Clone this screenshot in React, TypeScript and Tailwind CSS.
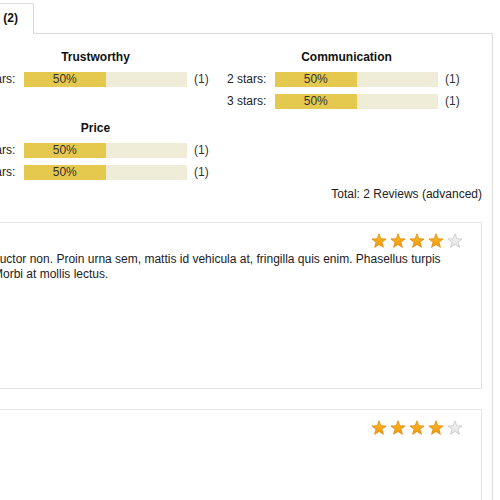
import React from "react";

type Group = { title: string; rows: { label: string; pct: string; count: string }[] };

const groups: Group[] = [
  { title: "Quality", rows: [{ label: "4 stars:", pct: "50%", count: "(1)" }] },
  { title: "Trustworthy", rows: [{ label: "4 stars:", pct: "50%", count: "(1)" }] },
  {
    title: "Communication",
    rows: [
      { label: "2 stars:", pct: "50%", count: "(1)" },
      { label: "3 stars:", pct: "50%", count: "(1)" },
    ],
  },
  {
    title: "Value",
    rows: [
      { label: "3 stars:", pct: "50%", count: "(1)" },
      { label: "5 stars:", pct: "50%", count: "(1)" },
    ],
  },
  {
    title: "Price",
    rows: [
      { label: "3 stars:", pct: "50%", count: "(1)" },
      { label: "4 stars:", pct: "50%", count: "(1)" },
    ],
  },
];

const reviews = [
  {
    author: "John Smith",
    date: "12 March 2012",
    text: "auctor non. Proin urna sem, mattis id vehicula at, fringilla quis enim. Phasellus turpis Morbi at mollis lectus.",
  },
  {
    author: "Jane Doe",
    date: "02 February 2012",
    text: "",
  },
];

function Star({ on }: { on: boolean }) {
  const id = on ? "starOn" : "starOff";
  return (
    <svg width="16" height="16" viewBox="0 0 16 16">
      <defs>
        <linearGradient id={id} x1="0" y1="0" x2="0" y2="1">
          <stop offset="0" stopColor={on ? "#fcc230" : "#f6f6f6"} />
          <stop offset="1" stopColor={on ? "#ef920c" : "#e2e2e2"} />
        </linearGradient>
      </defs>
      <polygon
        points="8,0.8 9.82,5.79 15.13,5.98 10.95,9.26 12.41,14.37 8,11.4 3.59,14.37 5.05,9.26 0.87,5.98 6.18,5.79"
        fill={`url(#${id})`}
        stroke={on ? "#e08a06" : "#c8c8c8"}
        strokeWidth="0.8"
        strokeLinejoin="round"
      />
    </svg>
  );
}

function RatingGroup({ group }: { group: Group }) {
  return (
    <div className="flex flex-col gap-[7px]">
      <div className="text-center font-bold text-[#111]">{group.title}</div>
      {group.rows.map((r) => (
        <div key={r.label} className="flex h-[15px] items-center">
          <span className="w-[40px] mr-[8px]">{r.label}</span>
          <div className="w-[163px] h-[15px] bg-[#efedd8]">
            <div className="w-1/2 h-full bg-[#e5c94f] flex items-center justify-center text-[#333]">
              {r.pct}
            </div>
          </div>
          <span className="ml-[7px] text-[#333]">{r.count}</span>
        </div>
      ))}
    </div>
  );
}

export default function App() {
  return (
    <div className="w-[500px] h-[500px] overflow-hidden bg-white font-['Liberation_Sans',Arial,sans-serif] text-[12px] leading-[15px] text-[#222]">
      <div className="-ml-[300px] w-[793px] pt-[3px]">
        {/* tabs */}
        <div className="flex">
          <div className="ml-[236px] relative z-10 -mb-px border border-b-0 border-[#dcdcdc] bg-white px-[15px] pt-[7px] pb-[8px] font-bold text-[#111]">
            Reviews (2)
          </div>
        </div>

        <div className="h-[470px] border border-[#dcdcdc] pt-[16px] pl-[24px] pr-[10px]">
          <div className="grid grid-cols-[239px_239px_239px] gap-x-[12px] gap-y-[12px]">
            {groups.map((g) => (
              <RatingGroup key={g.title} group={g} />
            ))}
          </div>

          <div className="mt-[7px] text-right text-[#222]">Total: 2 Reviews (advanced)</div>

          <div className="mt-[20px] flex flex-col gap-[20px]">
            {reviews.map((rv) => (
              <div key={rv.author} className="flex h-[167px] border border-[#e3e3e3] pt-[10px] pl-[10px] pr-[18px]">
                <div className="w-[247px] mr-[10px] flex flex-col gap-1">
                  <span className="font-bold">{rv.author}</span>
                  <span className="text-[#777]">{rv.date}</span>
                </div>
                <div className="flex-1">
                  <div className="flex justify-end gap-[3px]">
                    {[0, 1, 2, 3, 4].map((i) => (
                      <Star key={i} on={i < 4} />
                    ))}
                  </div>
                  <p className="mt-[3px] text-[#1c1a24]">{rv.text}</p>
                </div>
              </div>
            ))}
          </div>
        </div>
      </div>
    </div>
  );
}
